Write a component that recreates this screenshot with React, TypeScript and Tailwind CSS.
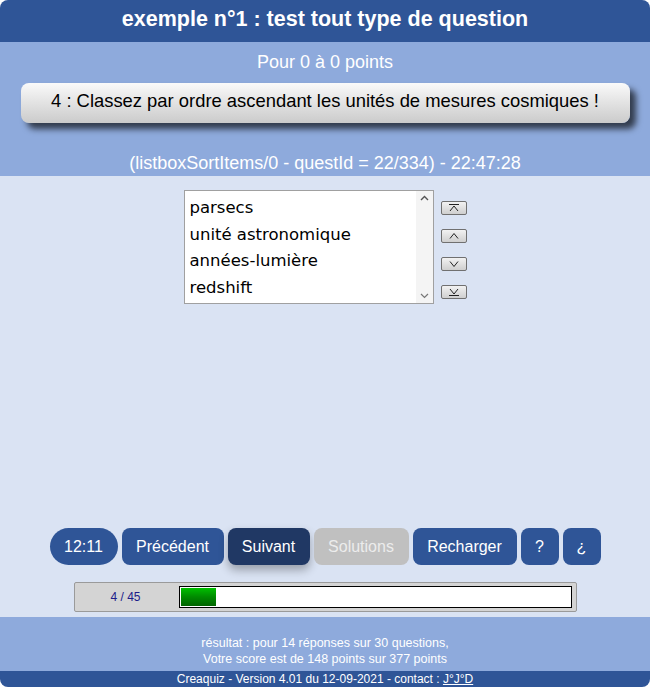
import React from "react";

const items = ["parsecs", "unité astronomique", "années-lumière", "redshift"];

function MoveButton({ kind }: { kind: "top" | "up" | "down" | "bottom" }) {
  return (
    <button className="w-[26px] h-[14px] flex items-center justify-center rounded-[2px] border border-[#707070] bg-gradient-to-b from-[#f2f2f2] to-[#cfcfcf]">
      <svg width="14" height="10" viewBox="0 0 14 10" fill="none" stroke="#222" strokeWidth="1">
        {kind === "top" && (
          <>
            <path d="M2 1.5h10" />
            <path d="M3 8l4-5 4 5" />
          </>
        )}
        {kind === "up" && <path d="M3 7.5l4-5 4 5" />}
        {kind === "down" && <path d="M3 2.5l4 5 4-5" />}
        {kind === "bottom" && (
          <>
            <path d="M3 2l4 5 4-5" />
            <path d="M2 8.5h10" />
          </>
        )}
      </svg>
    </button>
  );
}

export default function App() {
  return (
    <div className="w-[650px] h-[687px] bg-white font-['Liberation_Sans',Arial,sans-serif]">
      <div className="w-full h-full rounded-[8px] overflow-hidden flex flex-col">
        <div className="h-[42px] bg-[#2f5597] text-white font-bold text-[21.5px] flex items-center justify-center pb-[3px]">
          exemple n°1 : test tout type de question
        </div>

        <div className="h-[134px] bg-[#8eaadc] flex flex-col items-center">
          <div className="text-white text-[18px] mt-[11px] leading-[19px]">Pour 0 à 0 points</div>
          <div className="mt-[11px] w-[609px] h-[40px] rounded-[8px] bg-gradient-to-b from-[#fafafa] to-[#cbcbcb] shadow-[6px_6px_6px_rgba(0,0,0,0.65)] flex items-center justify-center text-[18.4px] text-black pb-[4px]">
            4 : Classez par ordre ascendant les unités de mesures cosmiques !
          </div>
          <div className="text-white text-[18px] mt-[31px] leading-[19px]">
            (listboxSortItems/0 - questId = 22/334) - 22:47:28
          </div>
        </div>

        <div className="h-[441px] bg-[#dae3f3] flex flex-col items-center">
          <div className="flex gap-[7px] mt-[14px]">
            <div className="w-[250px] h-[114px] bg-white border border-[#a0a0a0] flex">
              <div className="flex-1 pl-[5px] pt-[4px] font-['DejaVu_Sans',Verdana,sans-serif] text-[16.5px] text-black">
                {items.map((it) => (
                  <div key={it} className="h-[26.5px] leading-[26px]">
                    {it}
                  </div>
                ))}
              </div>
              <div className="w-[17px] bg-[#f4f4f4] flex flex-col justify-between items-center py-[4px]">
                <svg width="9" height="6" viewBox="0 0 9 6" fill="none" stroke="#555" strokeWidth="1.4">
                  <path d="M1 5l3.5-3.5L8 5" />
                </svg>
                <svg width="9" height="6" viewBox="0 0 9 6" fill="none" stroke="#777" strokeWidth="1.2">
                  <path d="M1 1l3.5 3.5L8 1" />
                </svg>
              </div>
            </div>
            <div className="flex flex-col gap-[14px] pt-[11px]">
              <MoveButton kind="top" />
              <MoveButton kind="up" />
              <MoveButton kind="down" />
              <MoveButton kind="bottom" />
            </div>
          </div>

          <div className="flex-1" />

          <div className="flex gap-[4px] text-[16px] text-white mb-[17px]">
            <div className="w-[68px] h-[37px] rounded-full bg-[#2f5597] flex items-center justify-center">12:11</div>
            <button className="w-[102px] h-[37px] rounded-[8px] bg-[#2f5597] flex items-center justify-center">Précédent</button>
            <button className="w-[82px] h-[37px] rounded-[8px] bg-[#203864] flex items-center justify-center shadow-[0_5px_10px_rgba(0,0,0,0.3)]">Suivant</button>
            <button className="w-[95px] h-[37px] rounded-[8px] bg-[#c0c0c0] text-[#ececec] flex items-center justify-center">Solutions</button>
            <button className="w-[104px] h-[37px] rounded-[8px] bg-[#2f5597] flex items-center justify-center">Recharger</button>
            <button className="w-[38px] h-[37px] rounded-[8px] bg-[#2f5597] flex items-center justify-center">?</button>
            <button className="w-[38px] h-[37px] rounded-[8px] bg-[#2f5597] flex items-center justify-center">¿</button>
          </div>

          <div className="w-[503px] h-[30px] mb-[5px] bg-[#d4d4d4] border border-[#9a9a9a] rounded-[2px] flex items-center">
            <div className="w-[104px] text-center text-[12px] text-[#1c1c8a] pr-[2px]">4 / 45</div>
            <div className="w-[393px] h-[22px] bg-white border-[1.5px] border-black p-[1px]">
              <div className="w-[35px] h-full bg-gradient-to-b from-[#00c000] via-[#008a00] to-[#006400]" />
            </div>
          </div>
        </div>

        <div className="h-[54px] bg-[#8eaadc] flex flex-col items-center justify-end pb-[4px] text-white text-[12.5px] leading-[16px]">
          <div>résultat : pour 14 réponses sur 30 questions,</div>
          <div>Votre score est de 148 points sur 377 points</div>
        </div>

        <div className="h-[16px] bg-[#2f5597] text-white text-[12px] leading-[16px] text-center">
          Creaquiz - Version 4.01 du 12-09-2021 - contact : <span className="underline">J°J°D</span>
        </div>
      </div>
    </div>
  );
}
